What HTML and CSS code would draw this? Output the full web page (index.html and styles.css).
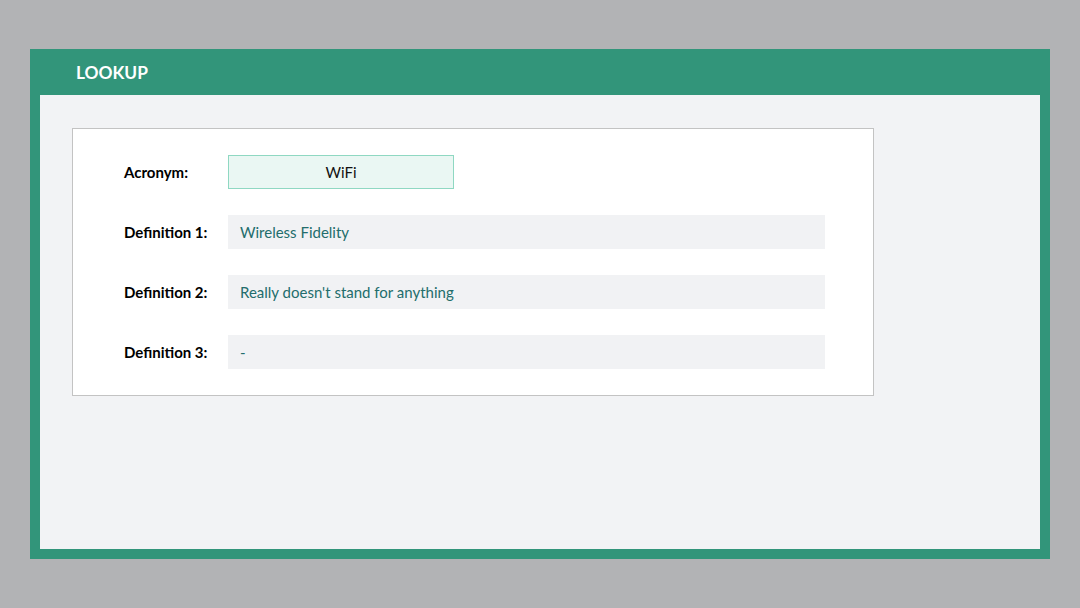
FILE: index.html
```html
<!DOCTYPE html>
<html>
<head>
<meta charset="utf-8">
<link rel="stylesheet" href="styles.css">
</head>
<body>
<div class="frame">
  <div class="header"><span class="title">LOOKUP</span></div>
  <div class="content">
    <div class="card">
      <div class="row">
        <div class="label">Acronym:</div>
        <div class="acronym">WiFi</div>
      </div>
      <div class="row">
        <div class="label">Definition 1:</div>
        <div class="field">Wireless Fidelity</div>
      </div>
      <div class="row">
        <div class="label">Definition 2:</div>
        <div class="field">Really doesn't stand for anything</div>
      </div>
      <div class="row">
        <div class="label">Definition 3:</div>
        <div class="field">-</div>
      </div>
    </div>
  </div>
</div>
</body>
</html>
```
FILE: styles.css
```css
html, body {
  margin: 0;
  padding: 0;
}
body {
  background: #b2b3b5;
  font-family: Lato, "Open Sans", sans-serif;
  width: 1080px;
  height: 608px;
  overflow: hidden;
}
.frame {
  margin: 49px 30px 0 30px;
  width: 1020px;
  height: 510px;
  background: #32957a;
  display: flex;
  flex-direction: column;
  box-sizing: border-box;
  padding: 0 10px 10px 10px;
}
.header {
  height: 46px;
  display: flex;
  align-items: center;
  padding-left: 36px;
  flex: none;
}
.title {
  color: #ffffff;
  font-weight: 700;
  font-size: 17.3px;
}
.content {
  flex: 1;
  background: #f2f3f5;
  padding: 33px 0 0 32px;
}
.card {
  width: 802px;
  box-sizing: border-box;
  height: 268px;
  background: #ffffff;
  border: 1px solid #c3c3c3;
  padding: 26px 48px 0 51px;
  display: flex;
  flex-direction: column;
  gap: 26px;
}
.row {
  display: flex;
  align-items: center;
  height: 34px;
}
.label {
  width: 104px;
  flex: none;
  font-weight: 700;
  font-size: 15px;
  color: #000;
}
.acronym {
  width: 226px;
  height: 34px;
  box-sizing: border-box;
  background: #eaf7f3;
  border: 1px solid #8fd8c2;
  display: flex;
  align-items: center;
  justify-content: center;
  font-size: 15px;
  color: #111;
}
.field {
  flex: 1;
  height: 34px;
  background: #f1f2f4;
  display: flex;
  align-items: center;
  padding-left: 12px;
  font-size: 15px;
  color: #236d6c;
}
```
